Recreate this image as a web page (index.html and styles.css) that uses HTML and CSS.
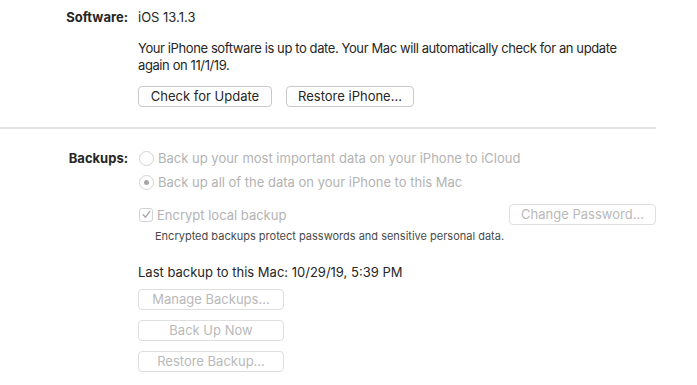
FILE: index.html
```html
<!DOCTYPE html>
<html lang="en">
<head>
    <meta charset="UTF-8">
    <meta name="viewport" content="width=device-width, initial-scale=1.0">
    <title>iPhone - General</title>
    <link rel="stylesheet" href="styles.css">
</head>
<body>

    <!-- Software section -->
    <div class="row software">
        <div class="label">Software:</div>
        <div class="content">
            <p class="version">iOS 13.1.3</p>
            <p class="status">Your iPhone software is up to date. Your Mac will automatically check for an update again on 11/1/19.</p>
            <div class="btn-row">
                <button class="btn btn-update">Check for Update</button>
                <button class="btn btn-restore">Restore iPhone...</button>
            </div>
        </div>
    </div>

    <div class="divider"></div>

    <!-- Backups section -->
    <div class="row backups">
        <div class="label">Backups:</div>
        <div class="content">
            <div class="option first">
                <span class="radio"></span>
                <span>Back up your most important data on your iPhone to iCloud</span>
            </div>
            <div class="option">
                <span class="radio checked"></span>
                <span>Back up all of the data on your iPhone to this Mac</span>
            </div>

            <div class="encrypt-row">
                <div class="option">
                    <span class="checkbox">
                        <svg width="9" height="9" viewBox="0 0 9 9"><path d="M1.2 4.8 L3.5 7.2 L7.8 1.4" fill="none" stroke="#a8a8a8" stroke-width="1.4" stroke-linecap="round" stroke-linejoin="round"/></svg>
                    </span>
                    <span>Encrypt local backup</span>
                </div>
                <button class="btn disabled btn-password">Change Password...</button>
            </div>
            <p class="note">Encrypted backups protect passwords and sensitive personal data.</p>

            <p class="last-backup">Last backup to this Mac: 10/29/19, 5:39 PM</p>
            <div class="btn-stack">
                <button class="btn disabled">Manage Backups...</button>
                <button class="btn disabled">Back Up Now</button>
                <button class="btn disabled">Restore Backup...</button>
            </div>
        </div>
    </div>

</body>
</html>
```

FILE: styles.css
```css
body {
    background-color: #FFFFFF;
    font-family: 'Inter', 'Liberation Sans', sans-serif;
    font-size: 13px;
    line-height: 16px;
    color: #262626;
    margin: 0;
    width: 697px;
    height: 385px;
    overflow: hidden;
}

p {
    margin: 0;
}

.row {
    display: flex;
    gap: 10px;
    width: 656px;
}

.label {
    width: 128px;
    flex-shrink: 0;
    text-align: right;
    font-weight: 700;
}

.content {
    flex: 1;
    min-width: 0;
}

.software {
    padding-top: 9px;
}

.software .label {
    line-height: 16px;
}

.status {
    width: 510px;
    margin-top: 15px;
    line-height: 17px;
    letter-spacing: -0.4px;
}

.btn-row {
    display: flex;
    gap: 14px;
    margin-top: 12px;
}

.btn {
    font-family: inherit;
    font-size: 13px;
    color: #262626;
    background-color: #FFFFFF;
    border: 1px solid #c9c9c9;
    border-radius: 4px;
    height: 21px;
    padding: 0;
    line-height: 19px;
}

.btn-update {
    width: 134px;
}

.btn-restore {
    width: 128px;
}

.btn.disabled {
    color: #b9b9b9;
    border-color: #dedede;
}

.divider {
    height: 2px;
    background-color: #e3e3e3;
    width: 656px;
    margin-top: 20px;
}

.backups {
    padding-top: 21px;
}

.backups .label {
    line-height: 16px;
}

.option {
    display: flex;
    align-items: center;
    gap: 4px;
    color: #b3b3b3;
    height: 16px;
    margin-left: 1px;
}

.option + .option {
    margin-top: 8px;
}

.radio {
    width: 13px;
    height: 13px;
    border: 1px solid #d3d3d3;
    border-radius: 50%;
    display: flex;
    align-items: center;
    justify-content: center;
}

.radio.checked::after {
    content: "";
    width: 5px;
    height: 5px;
    border-radius: 50%;
    background-color: #a6a6a6;
}

.checkbox {
    width: 12px;
    height: 12px;
    border: 1px solid #d3d3d3;
    border-radius: 3px;
    display: flex;
    align-items: center;
    justify-content: center;
}

.encrypt-row {
    display: flex;
    justify-content: space-between;
    align-items: center;
    margin-top: 14px;
}

.btn-password {
    width: 147px;
}

.note {
    font-size: 11px;
    line-height: 14px;
    color: #4a4a4a;
    margin-top: 4px;
    margin-left: 17px;
}

.last-backup {
    margin-top: 21px;
}

.btn-stack {
    display: flex;
    flex-direction: column;
    gap: 10px;
    margin-top: 9px;
}

.btn-stack .btn {
    width: 146px;
}
```
